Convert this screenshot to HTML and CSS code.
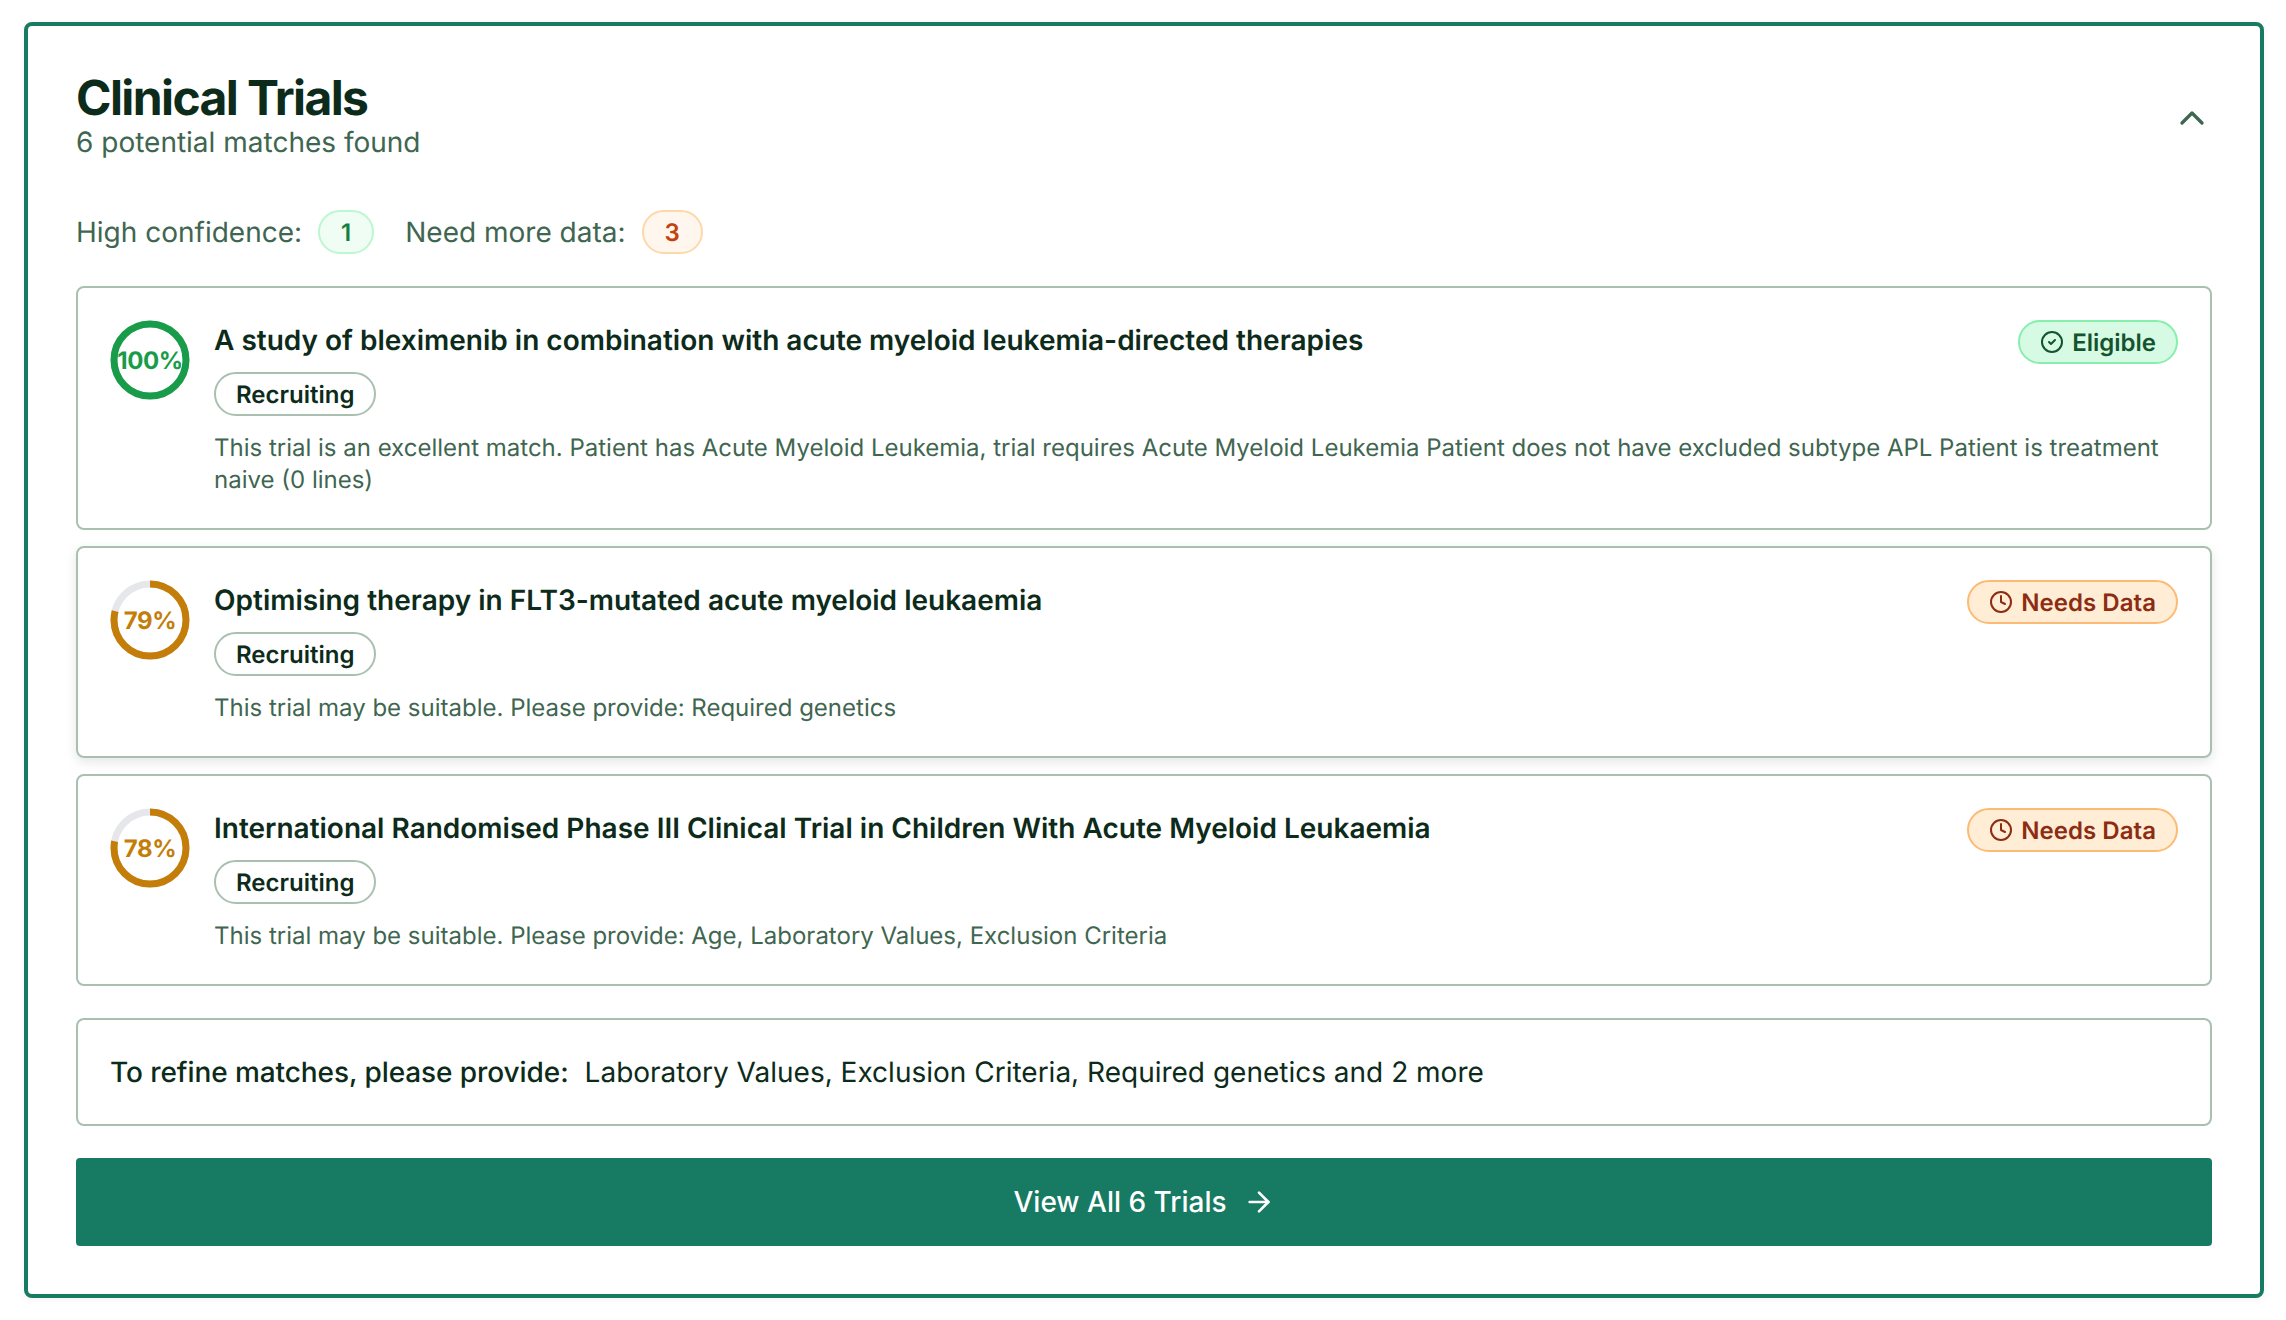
FILE: index.html
```html
<!DOCTYPE html>
<html lang="en">
<head>
    <meta charset="UTF-8">
    <title>Clinical Trials</title>
    <link rel="stylesheet" href="styles.css">
</head>
<body>
    <div class="top-edge"></div>

    <section class="trials-panel">
        <!-- Header -->
        <header class="panel-header">
            <div>
                <h1 class="panel-title">Clinical Trials</h1>
                <p class="panel-subtitle">6 potential matches found</p>
            </div>
            <svg class="chevron" viewBox="0 0 24 24"><path d="m18 15-6-6-6 6"/></svg>
        </header>

        <!-- Summary counts -->
        <div class="summary">
            <span class="summary-label">High confidence:</span>
            <span class="count count-high">1</span>
            <span class="summary-label summary-second">Need more data:</span>
            <span class="count count-need">3</span>
        </div>

        <!-- Trial cards -->
        <div class="trial-list">
            <article class="trial-card">
                <div class="ring ring-green">
                    <svg viewBox="0 0 80 80">
                        <circle class="ring-track" cx="40" cy="40" r="36"/>
                        <circle class="ring-value" cx="40" cy="40" r="36" pathLength="100" stroke-dasharray="100 100"/>
                    </svg>
                    <span class="ring-label">100%</span>
                </div>
                <div class="trial-body">
                    <div class="trial-top">
                        <h2 class="trial-title">A study of bleximenib in combination with acute myeloid leukemia-directed therapies</h2>
                        <span class="status status-eligible">
                            <svg viewBox="0 0 24 24"><circle cx="12" cy="12" r="10"/><path d="m9 12 2 2 4-4"/></svg>
                            Eligible
                        </span>
                    </div>
                    <span class="recruiting">Recruiting</span>
                    <p class="trial-text">This trial is an excellent match. Patient has Acute Myeloid Leukemia, trial requires Acute Myeloid Leukemia Patient does not have excluded subtype APL Patient is treatment naive (0 lines)</p>
                </div>
            </article>

            <article class="trial-card trial-card-hover">
                <div class="ring ring-amber">
                    <svg viewBox="0 0 80 80">
                        <circle class="ring-track" cx="40" cy="40" r="36"/>
                        <circle class="ring-value" cx="40" cy="40" r="36" pathLength="100" stroke-dasharray="79 100"/>
                    </svg>
                    <span class="ring-label">79%</span>
                </div>
                <div class="trial-body">
                    <div class="trial-top">
                        <h2 class="trial-title">Optimising therapy in FLT3-mutated acute myeloid leukaemia</h2>
                        <span class="status status-needs">
                            <svg viewBox="0 0 24 24"><circle cx="12" cy="12" r="10"/><path d="M12 6v6l4 2"/></svg>
                            Needs Data
                        </span>
                    </div>
                    <span class="recruiting">Recruiting</span>
                    <p class="trial-text">This trial may be suitable. Please provide: Required genetics</p>
                </div>
            </article>

            <article class="trial-card">
                <div class="ring ring-amber">
                    <svg viewBox="0 0 80 80">
                        <circle class="ring-track" cx="40" cy="40" r="36"/>
                        <circle class="ring-value" cx="40" cy="40" r="36" pathLength="100" stroke-dasharray="78 100"/>
                    </svg>
                    <span class="ring-label">78%</span>
                </div>
                <div class="trial-body">
                    <div class="trial-top">
                        <h2 class="trial-title">International Randomised Phase III Clinical Trial in Children With Acute Myeloid Leukaemia</h2>
                        <span class="status status-needs">
                            <svg viewBox="0 0 24 24"><circle cx="12" cy="12" r="10"/><path d="M12 6v6l4 2"/></svg>
                            Needs Data
                        </span>
                    </div>
                    <span class="recruiting">Recruiting</span>
                    <p class="trial-text">This trial may be suitable. Please provide: Age, Laboratory Values, Exclusion Criteria</p>
                </div>
            </article>
        </div>

        <!-- Missing data prompt -->
        <div class="refine">
            <strong class="refine-label">To refine matches, please provide:</strong>
            <span>Laboratory Values, Exclusion Criteria, Required genetics and 2 more</span>
        </div>

        <button class="view-all">
            View All 6 Trials
            <svg viewBox="0 0 24 24"><path d="M5 12h14"/><path d="m12 5 7 7-7 7"/></svg>
        </button>
    </section>
</body>
</html>
```

FILE: styles.css
```css
/* Page */
body {
    margin: 0;
    background-color: white;
    font-family: Inter, "Liberation Sans", sans-serif;
    color: #0d2b1a;
    text-rendering: geometricPrecision;
}

/* Shadow of the block cut off above the panel */
.top-edge {
    height: 0;
    margin: 0 24px;
    box-shadow: 0 2px 8px rgba(0, 0, 0, 0.08);
}

/* Outer panel */
.trials-panel {
    margin: 22px 22px 22px 24px;
    padding: 48px;
    border: 4px solid #177a62;
    border-radius: 8px;
    background: white;
    box-shadow: 0 2px 6px rgba(0, 0, 0, 0.05);
}

.panel-header {
    display: flex;
    justify-content: space-between;
    align-items: center;
}

.panel-title {
    margin: 0;
    font-size: 48px;
    line-height: 48px;
    font-weight: 700;
    letter-spacing: -1.6px;
}

.panel-subtitle {
    margin: 0;
    font-size: 28px;
    line-height: 40px;
    color: #3f6650;
}

.chevron {
    width: 40px;
    height: 40px;
    fill: none;
    stroke: #3f6650;
    stroke-width: 2;
    stroke-linecap: round;
    stroke-linejoin: round;
}

/* Summary counts */
.summary {
    display: flex;
    align-items: center;
    margin-top: 48px;
    font-size: 28px;
    color: #3f6650;
}

.summary-second {
    margin-left: 31px;
}

.count {
    display: flex;
    justify-content: center;
    align-items: center;
    box-sizing: border-box;
    height: 44px;
    margin-left: 16px;
    padding: 0 21px;
    border: 2px solid;
    border-radius: 22px;
    font-size: 24px;
    font-weight: 600;
}

.count-high {
    background: #f0fdf4;
    border-color: #bbf7d0;
    color: #15803d;
}

.count-need {
    background: #fff7ed;
    border-color: #fed7aa;
    color: #c2410c;
}

/* Trial cards */
.trial-list {
    display: flex;
    flex-direction: column;
    gap: 16px;
    margin-top: 32px;
}

.trial-card {
    display: flex;
    gap: 24px;
    padding: 32px;
    border: 2px solid #a9c0b1;
    border-radius: 8px;
}

.trial-card-hover {
    box-shadow: 0 4px 12px rgba(0, 0, 0, 0.1);
}

.ring {
    display: grid;
    flex: none;
    width: 80px;
    height: 80px;
    place-items: center;
}

.ring svg,
.ring-label {
    grid-area: 1 / 1;
}

.ring svg {
    width: 80px;
    height: 80px;
    transform: rotate(-90deg);
    fill: none;
    stroke-width: 7;
}

.ring-track {
    stroke: #e5e7eb;
}

.ring-label {
    font-size: 24px;
    font-weight: 700;
    letter-spacing: -0.4px;
}

.ring-green .ring-value {
    stroke: #189c49;
}

.ring-green .ring-label {
    color: #189c49;
}

.ring-amber .ring-value {
    stroke: #c47d09;
}

.ring-amber .ring-label {
    color: #c47d09;
}

.trial-body {
    flex: 1;
}

.trial-top {
    display: flex;
    justify-content: space-between;
    align-items: flex-start;
    gap: 16px;
    margin-bottom: 8px;
}

.trial-title {
    margin: 0;
    font-size: 28px;
    line-height: 40px;
    font-weight: 600;
}

.status {
    display: flex;
    flex: none;
    align-items: center;
    gap: 8px;
    box-sizing: border-box;
    height: 44px;
    padding: 0 20px;
    border: 2px solid;
    border-radius: 22px;
    font-size: 24px;
    font-weight: 600;
}

.status svg {
    width: 24px;
    height: 24px;
    fill: none;
    stroke: currentColor;
    stroke-width: 2;
    stroke-linecap: round;
    stroke-linejoin: round;
}

.status-eligible {
    background: #d7fae4;
    border-color: #86efac;
    color: #14532d;
}

.status-needs {
    background: #ffedd5;
    border-color: #fdba74;
    color: #8c2c12;
    letter-spacing: 0.05px;
}

.recruiting {
    display: flex;
    align-items: center;
    box-sizing: border-box;
    width: fit-content;
    height: 44px;
    padding: 0 20px;
    border: 2px solid #a9c0b1;
    border-radius: 22px;
    font-size: 24px;
    font-weight: 600;
}

.trial-text {
    margin: 16px 0 0;
    font-size: 24px;
    line-height: 32px;
    color: #3f6650;
}

/* Refine prompt */
.refine {
    display: flex;
    gap: 16px;
    margin-top: 32px;
    padding: 32px;
    border: 2px solid #a9c0b1;
    border-radius: 8px;
    font-size: 28px;
    line-height: 40px;
}

.refine-label {
    font-weight: 500;
    letter-spacing: -0.08px;
}

/* Button */
.view-all {
    display: flex;
    justify-content: center;
    align-items: center;
    gap: 16px;
    width: 100%;
    height: 88px;
    margin-top: 32px;
    border: none;
    border-radius: 4px;
    background-color: #177a62;
    color: white;
    font-family: inherit;
    font-size: 28px;
    font-weight: 500;
}

.view-all svg {
    width: 32px;
    height: 32px;
    fill: none;
    stroke: white;
    stroke-width: 2;
    stroke-linecap: round;
    stroke-linejoin: round;
}
```
